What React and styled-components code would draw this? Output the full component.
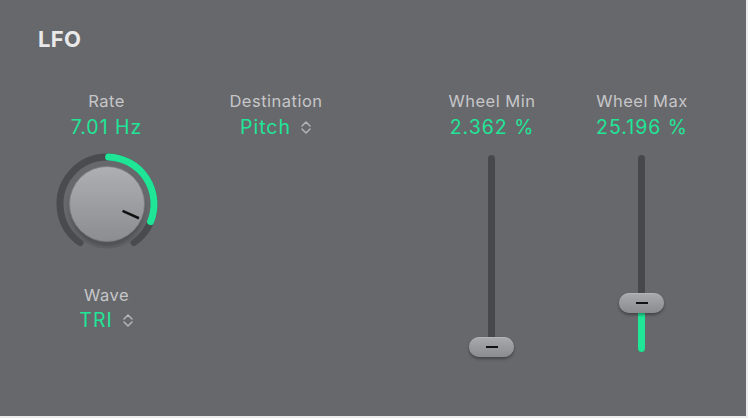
import React from 'react';
import styled, { createGlobalStyle } from 'styled-components';

const GlobalStyle = createGlobalStyle`
	html, body {
		margin: 0;
		padding: 0;
		background: #ededed;
	}
	body {
		font-family: Inter, "Liberation Sans", Arial, sans-serif;
	}
`;

const Panel = styled.div`
	width: 746px;
	height: 416px;
	box-sizing: border-box;
	background-color: #67686c;
	padding: 26px 0 0 36px;
	display: flex;
	flex-direction: column;
`;

const Title = styled.h1`
	margin: 0 0 0 2px;
	font-size: 22px;
	line-height: 26px;
	font-weight: 700;
	letter-spacing: 0.3px;
	color: #e9e9ea;
`;

const Row = styled.div`
	display: flex;
	flex-direction: row;
	margin-top: 39px;
`;

const Column = styled.div`
	width: ${props => props.width}px;
	margin-left: ${props => props.offset || 0}px;
	display: flex;
	flex-direction: column;
	align-items: center;
`;

const Label = styled.div`
	font-size: 16.5px;
	line-height: 20px;
	letter-spacing: 0.5px;
	color: #c6c6c8;
	white-space: nowrap;
`;

const Value = styled.div`
	margin-top: ${props => props.gap || 4}px;
	font-size: 19.5px;
	line-height: 24px;
	letter-spacing: 1px;
	color: #1fe597;
	white-space: nowrap;
	display: flex;
	align-items: center;
`;

const Chevron = styled.svg`
	margin-left: 9px;
	margin-top: 1px;
`;

const KnobBox = styled.div`
	margin-top: 9px;
	width: 112px;
	height: 112px;
	margin-bottom: 25px;
`;

const SliderBox = styled.div`
	position: relative;
	margin-top: 11px;
	width: 50px;
	height: 210px;
`;

const Track = styled.div`
	position: absolute;
	left: 21px;
	top: 5px;
	width: 7px;
	height: 197px;
	border-radius: 4px;
	background-color: #474849;
	overflow: hidden;
`;

const Fill = styled.div`
	position: absolute;
	left: 0;
	bottom: 0;
	width: 100%;
	background-color: #1fe597;
`;

const Thumb = styled.div`
	position: absolute;
	left: 2px;
	width: 45px;
	height: 20px;
	border-radius: 10px;
	background: linear-gradient(#a9aaac, #8b8c8f);
	box-shadow: 0 2px 3px rgba(0, 0, 0, 0.35), inset 0 1px 0 rgba(255, 255, 255, 0.15);
	display: flex;
	align-items: center;
	justify-content: center;

	&::after {
		content: '';
		width: 12px;
		height: 2px;
		background: #111;
	}
`;

const UpDown = () => (
	<Chevron width="12" height="15" viewBox="0 0 12 15">
		<path d="M2 6 L6 2 L10 6 M2 9 L6 13 L10 9" fill="none" stroke="#b4b5b7" strokeWidth="1.5" strokeLinecap="round" strokeLinejoin="round" />
	</Chevron>
);

const polar = (a, r) => {
	const rad = (a * Math.PI) / 180;
	return [56 + r * Math.sin(rad), 56 - r * Math.cos(rad)];
};

const arc = (from, to, r) => {
	const [x1, y1] = polar(from, r);
	const [x2, y2] = polar(to, r);
	const large = to - from > 180 ? 1 : 0;
	return `M${x1} ${y1} A${r} ${r} 0 ${large} 1 ${x2} ${y2}`;
};

const Knob = ({ angle }) => {
	const [px1, py1] = polar(angle, 17);
	const [px2, py2] = polar(angle, 35);
	return (
		<KnobBox>
			<svg width="112" height="112" viewBox="0 0 112 112">
				<defs>
					<linearGradient id="body" x1="0" y1="0" x2="0" y2="1">
						<stop offset="0" stopColor="#aeafb2" />
						<stop offset="1" stopColor="#8c8d90" />
					</linearGradient>
					<radialGradient id="shade" cx="0.5" cy="0.55" r="0.5">
						<stop offset="0.8" stopColor="#4f5053" stopOpacity="0.9" />
						<stop offset="1" stopColor="#67686c" stopOpacity="0" />
					</radialGradient>
				</defs>
				<path d={arc(-145, 145, 47)} fill="none" stroke="#4a4b4e" strokeWidth="7" strokeLinecap="round" />
				<path d={arc(2, angle - 2, 47)} fill="none" stroke="#1fe597" strokeWidth="7" strokeLinecap="round" />
				<circle cx="56" cy="58" r="43" fill="url(#shade)" />
				<circle cx="56" cy="56" r="37.5" fill="url(#body)" stroke="#7d7e81" strokeWidth="0.8" />
				<line x1={px1} y1={py1} x2={px2} y2={py2} stroke="#111" strokeWidth="2.5" />
			</svg>
		</KnobBox>
	);
};

const Slider = ({ thumb, fill }) => (
	<SliderBox>
		<Track>
			<Fill style={{ height: fill }} />
		</Track>
		<Thumb style={{ top: thumb }} />
	</SliderBox>
);

const App = () => {
	return (
		<>
			<GlobalStyle />
			<Panel>
				<Title>LFO</Title>
				<Row>
					<Column width={141}>
						<Label>Rate</Label>
						<Value>7.01 Hz</Value>
						<Knob angle={114} />
						<Label>Wave</Label>
						<Value gap={3}>TRI<UpDown /></Value>
					</Column>
					<Column width={138} offset={30}>
						<Label>Destination</Label>
						<Value>Pitch<UpDown /></Value>
					</Column>
					<Column width={140} offset={77}>
						<Label>Wheel Min</Label>
						<Value>2.362 %</Value>
						<Slider thumb={187} fill={6} />
					</Column>
					<Column width={140} offset={10}>
						<Label>Wheel Max</Label>
						<Value>25.196 %</Value>
						<Slider thumb={143} fill={50} />
					</Column>
				</Row>
			</Panel>
		</>
	);
};

export default App;
